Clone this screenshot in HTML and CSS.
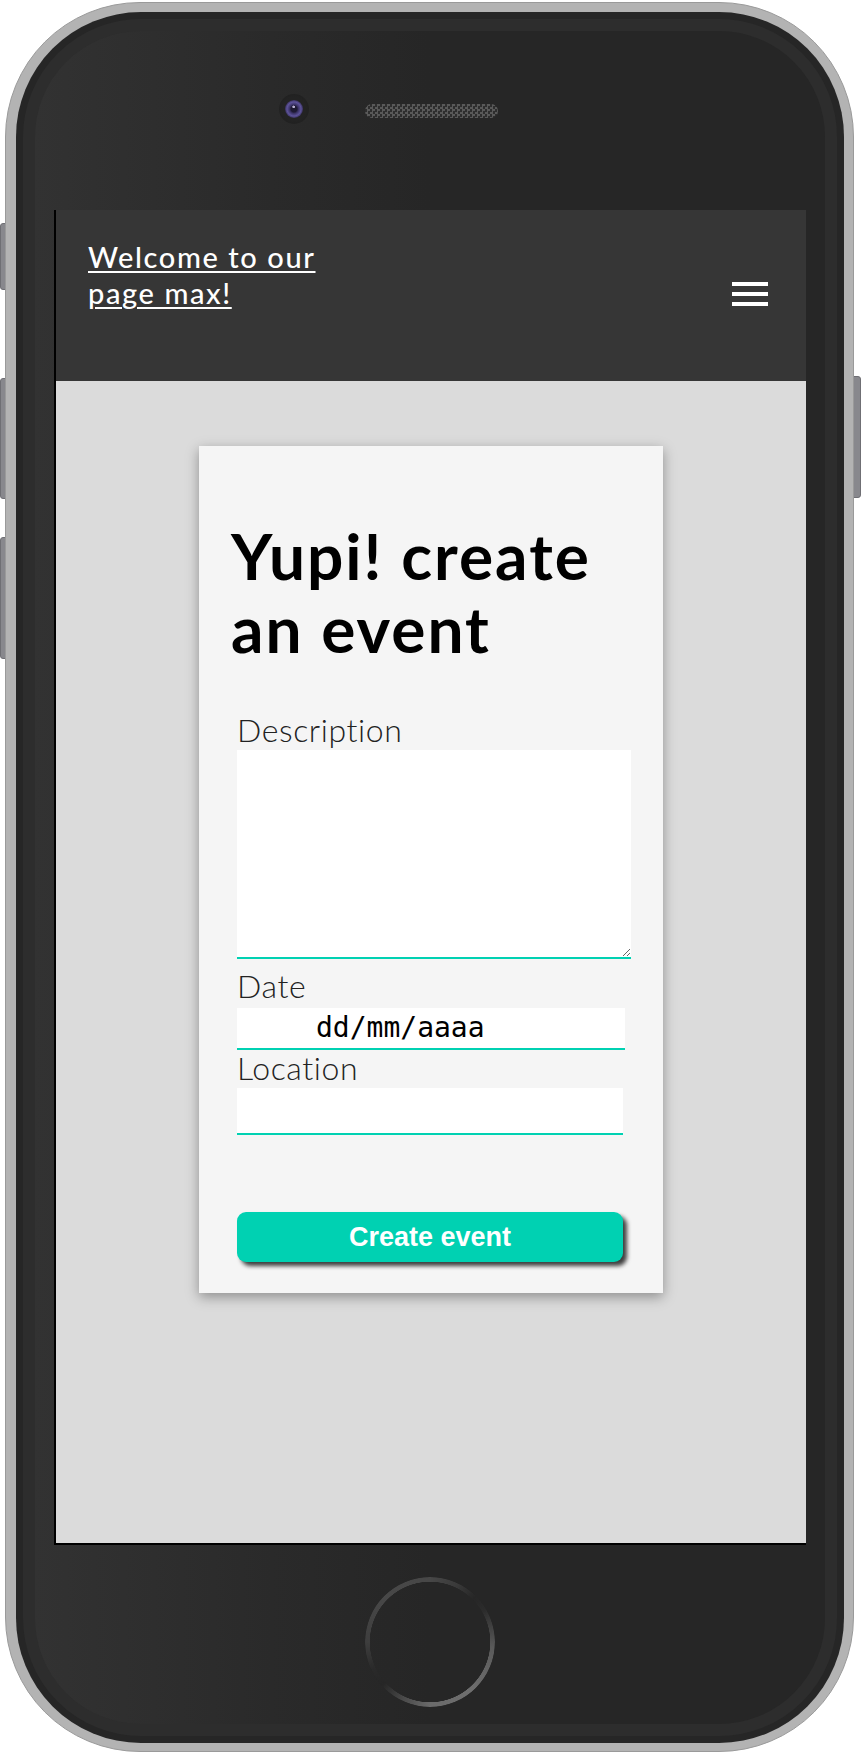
FILE: index.html
```html
<!DOCTYPE html>
<html lang="en">
<head>
<meta charset="utf-8">
<title>Create event</title>
<link rel="stylesheet" href="styles.css">
</head>
<body>
<div class="phone">
  <span class="side-btn side-mute"></span>
  <span class="side-btn side-vol-up"></span>
  <span class="side-btn side-vol-down"></span>
  <span class="side-btn side-power"></span>
  <div class="phone-body">
    <div class="bezel">
      <div class="bezel-top">
        <span class="camera"><span class="lens"></span></span>
        <span class="speaker"></span>
      </div>
      <div class="screen">
        <header class="navbar">
          <a class="brand" href="#">Welcome to our page max!</a>
          <span class="burger"><span></span><span></span><span></span></span>
        </header>
        <main class="content">
          <section class="card">
            <h1 class="card-title">Yupi! create an event</h1>
            <form class="event-form">
              <label class="label label-desc" for="desc">Description</label>
              <textarea id="desc" class="textarea"></textarea>
              <label class="label label-date">Date</label>
              <div class="control date">dd/mm/aaaa</div>
              <label class="label label-loc" for="loc">Location</label>
              <input id="loc" class="control location" type="text">
              <button class="btn" type="button">Create event</button>
            </form>
          </section>
        </main>
      </div>
      <div class="bezel-bottom"><span class="home"></span></div>
    </div>
  </div>
</div>
</body>
</html>
```

FILE: styles.css
```css
html, body {
  margin: 0;
  padding: 0;
}
body {
  width: 862px;
  height: 1754px;
  overflow: hidden;
  background: #ffffff;
  font-family: "Lato", "Open Sans", sans-serif;
}

/* ---------- phone frame ---------- */
.phone {
  position: relative;
  box-sizing: border-box;
  width: 849px;
  height: 1750px;
  margin: 2px 0 0 5px;
  padding: 9px 9px 8px 10px;
  border: 1px solid #9a9a9a;
  border-radius: 135px;
  background: #b3b3b3;
}
.side-btn {
  position: absolute;
  z-index: -1;
  width: 12px;
  background: #88888d;
  border: 1px solid #6f6f74;
  box-sizing: border-box;
}
.side-mute { left: -6px; top: 220px; height: 67px; border-radius: 3px 0 0 3px; }
.side-vol-up { left: -6px; top: 375px; height: 121px; border-radius: 3px 0 0 3px; }
.side-vol-down { left: -6px; top: 534px; height: 122px; border-radius: 3px 0 0 3px; }
.side-power { right: -8px; top: 373px; height: 122px; border-radius: 0 3px 3px 0; }

.phone-body {
  box-sizing: border-box;
  height: 100%;
  padding: 7px;
  border-radius: 125px;
  background: #262626;
}
.bezel {
  box-sizing: border-box;
  height: 100%;
  display: flex;
  flex-direction: column;
  border: 12px solid #2d2d2d;
  border-radius: 118px;
  background: linear-gradient(90deg, #323232 0%, #2a2a2a 30%, #262626 50%, #262626 100%);
}
.bezel-top {
  height: 179px;
  display: flex;
  align-items: flex-start;
}
.camera {
  width: 30px;
  height: 30px;
  margin: 63px 0 0 244px;
  border-radius: 50%;
  background: radial-gradient(circle, #232323 55%, #1d1d1d 100%);
  display: flex;
  align-items: center;
  justify-content: center;
}
.lens {
  width: 18px;
  height: 18px;
  border-radius: 50%;
  background:
    radial-gradient(circle at 48% 38%, #b9b3d6 0 1px, transparent 1.6px),
    radial-gradient(circle, #1e1a33 0 3px, #3c3468 4.5px, #5d539a 7px, #3a325e 9px);
}
.speaker {
  width: 133px;
  height: 14px;
  margin: 73px 0 0 56px;
  border-radius: 7px;
  background: repeating-conic-gradient(#595959 0 25%, #2e2e2e 0 50%) 0 0 / 5px 5px;
}

/* ---------- screen ---------- */
.screen {
  box-sizing: border-box;
  width: 752px;
  height: 1335px;
  margin: 0 auto;
  border-left: 2px solid #000;
  border-bottom: 2px solid #000;
  background: #dbdbdb;
  display: flex;
  flex-direction: column;
}
.navbar {
  box-sizing: border-box;
  height: 171px;
  padding: 0 38px 0 32px;
  background: #363636;
  display: flex;
  align-items: flex-start;
  justify-content: space-between;
}
.brand {
  width: 260px;
  margin-top: 29px;
  color: #ffffff;
  font-size: 29px;
  font-weight: 500;
  line-height: 36px;
  letter-spacing: 1.6px;
  text-decoration: underline;
  text-decoration-thickness: 2px;
  text-underline-offset: 3px;
}
.burger {
  width: 36px;
  margin-top: 72px;
  display: flex;
  flex-direction: column;
  gap: 6px;
}
.burger span {
  display: block;
  height: 4px;
  background: #ffffff;
}

.content {
  flex: 1;
  padding-top: 65px;
}
.card {
  box-sizing: border-box;
  width: 464px;
  margin: 0 auto;
  padding: 73px 32px 31px 32px;
  background: #f5f5f5;
  box-shadow: 0 4px 12px rgba(0, 0, 0, 0.35);
}
.card-title {
  margin: 0;
  color: #000000;
  font-size: 64px;
  font-weight: 700;
  line-height: 73px;
  letter-spacing: 2px;
}
.event-form {
  margin: 47px 0 0 6px;
}
.label {
  display: block;
  color: #222222;
  font-size: 32px;
  font-weight: 300;
  line-height: 36px;
  letter-spacing: 0.6px;
}
.label-date { margin-top: 9px; }
.label-loc { margin-top: 0; }

.textarea,
.control {
  display: block;
  box-sizing: border-box;
  margin: 0;
  padding: 0;
  border: none;
  border-bottom: 2px solid #00d1b2;
  border-radius: 0;
  background: #ffffff;
  outline: none;
}
.textarea {
  width: 394px;
  height: 209px;
  margin-top: 2px;
  font-family: "DejaVu Sans Mono", monospace;
}
.date {
  width: 388px;
  height: 42px;
  margin-top: 4px;
  padding-left: 79px;
  color: #000;
  font-family: "DejaVu Sans Mono", monospace;
  font-size: 28px;
  line-height: 40px;
}
.location {
  width: 386px;
  height: 47px;
  margin-top: 2px;
  font-size: 24px;
}
.btn {
  display: block;
  width: 386px;
  height: 50px;
  margin-top: 77px;
  padding: 0;
  border: none;
  border-radius: 9px;
  background: #00d1b2;
  color: #ffffff;
  font-family: "Liberation Sans", Arial, sans-serif;
  font-size: 27px;
  font-weight: 700;
  line-height: 50px;
  box-shadow: 4px 4px 4px rgba(0, 0, 0, 0.75);
}

/* ---------- bottom bezel ---------- */
.bezel-bottom {
  flex: 1;
  display: flex;
  justify-content: center;
}
.home {
  width: 130px;
  height: 130px;
  margin-top: 32px;
  border-radius: 50%;
  background: conic-gradient(
    #474747 0deg,
    #3a3a3a 25deg,
    #262626 45deg,
    #2c2c2c 60deg,
    #5a5a5a 95deg,
    #6e6e6e 140deg,
    #6a6a6a 180deg,
    #4a4a4a 205deg,
    #262626 228deg,
    #2a2a2a 245deg,
    #3e3e3e 270deg,
    #484848 315deg,
    #474747 360deg
  );
  -webkit-mask: radial-gradient(circle closest-side, transparent calc(100% - 5px), #000 calc(100% - 4.5px));
  mask: radial-gradient(circle closest-side, transparent calc(100% - 5px), #000 calc(100% - 4.5px));
}
```
